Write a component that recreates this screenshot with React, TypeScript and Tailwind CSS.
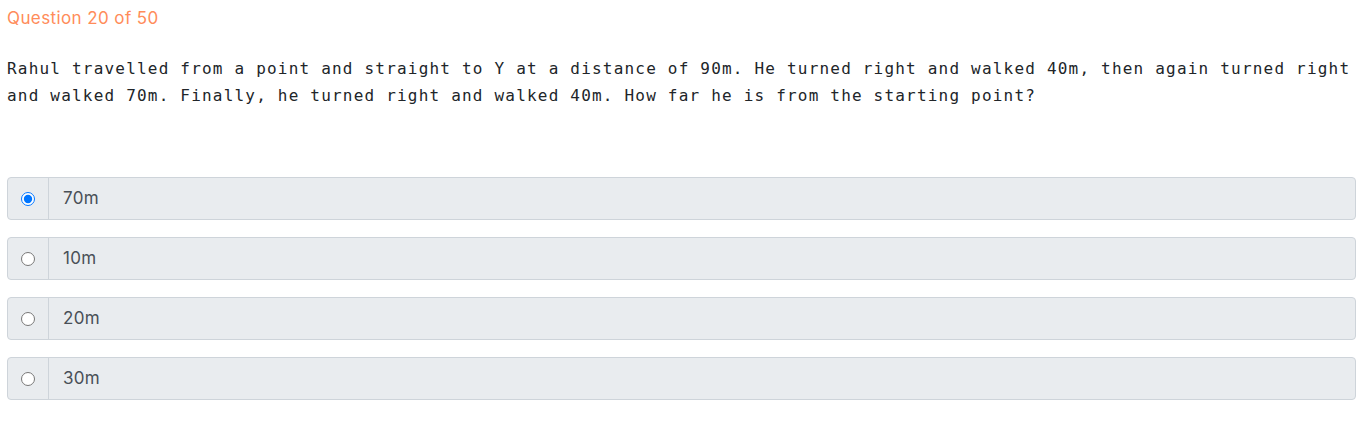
import React from "react";

const options = ["70m", "10m", "20m", "30m"];

export default function App() {
  return (
    <div className="w-[1365px] h-[439px] bg-white pl-[7px] pr-[9px] pt-[6px]" style={{ fontFamily: "Inter, 'Noto Sans', sans-serif" }}>
      <div className="text-[17px] leading-[24px] text-[#ff8c5a] tracking-[0.4px]">Question 20 of 50</div>
      <div className="mt-[25px] text-[16px] leading-[27px] tracking-[1.2px] text-[#212529]" style={{ fontFamily: "'DejaVu Sans Mono', 'Liberation Mono', monospace" }}>
        Rahul travelled from a point and straight to Y at a distance of 90m. He turned right and walked 40m, then again turned right and walked 70m. Finally, he turned right and walked 40m. How far he is from the starting point?
      </div>
      <div className="mt-[68px] flex flex-col gap-[17px]">
        {options.map((o, i) => (
          <div key={o} className="flex h-[43px] rounded-[4px] border border-[#ced4da] bg-[#e9ecef]">
            <div className="w-[41px] flex items-center justify-center border-r border-[#ced4da]">
              <input type="radio" name="q" defaultChecked={i === 0} className="w-[14px] h-[14px] m-0 accent-[#0075ff]" />
            </div>
            <div className="flex items-center pl-[14px] text-[17px] tracking-[0.3px] text-[#495057]">{o}</div>
          </div>
        ))}
      </div>
    </div>
  );
}
